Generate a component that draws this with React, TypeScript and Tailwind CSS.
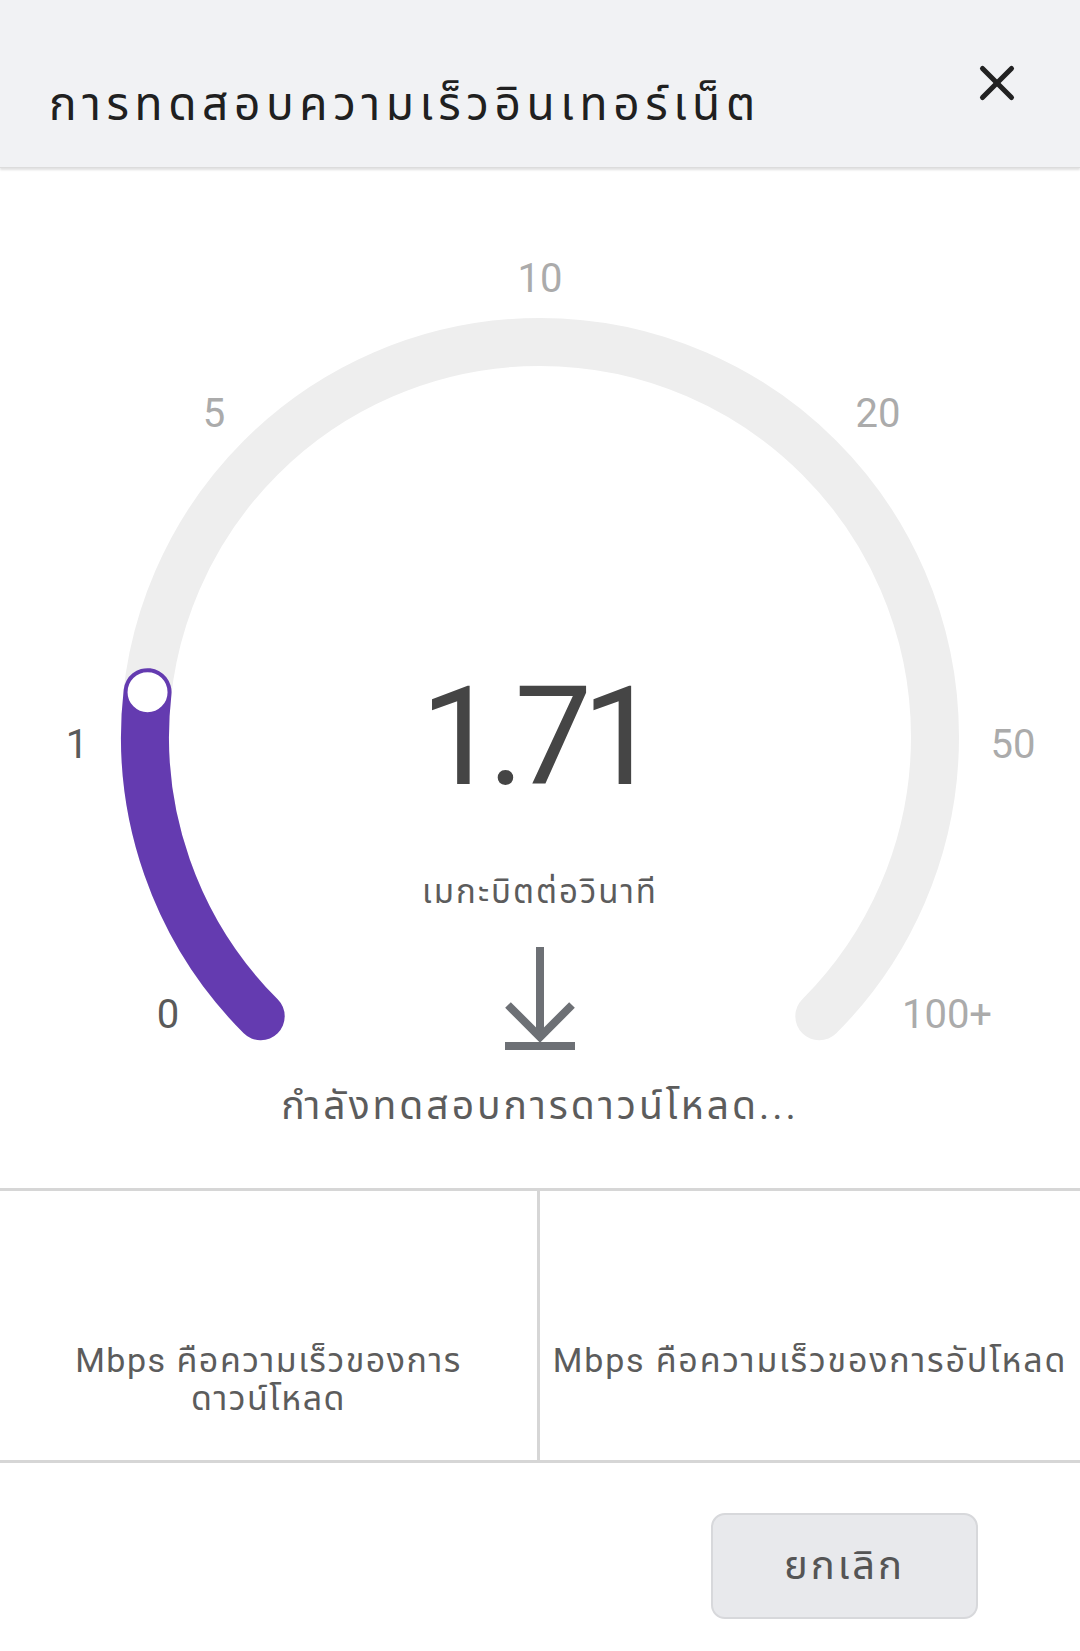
import { X } from "lucide-react";

const CENTER_X = 540;
const CENTER_Y = 569;
const RADIUS = 395;
const TRACK = 48;

const ticks = [
  { label: "0", x: 168, y: 846, dark: true },
  { label: "1", x: 77, y: 576, dark: true },
  { label: "5", x: 214, y: 245, dark: false },
  { label: "10", x: 540, y: 110, dark: false },
  { label: "20", x: 878, y: 245, dark: false },
  { label: "50", x: 1013, y: 576, dark: false },
  { label: "100+", x: 947, y: 846, dark: false },
];

function polar(angleDeg: number) {
  const rad = ((angleDeg - 90) * Math.PI) / 180;
  return {
    x: CENTER_X + RADIUS * Math.cos(rad),
    y: CENTER_Y + RADIUS * Math.sin(rad),
  };
}

function arcPath(from: number, to: number) {
  const a = polar(from);
  const b = polar(to);
  const large = to - from > 180 ? 1 : 0;
  return `M ${a.x} ${a.y} A ${RADIUS} ${RADIUS} 0 ${large} 1 ${b.x} ${b.y}`;
}

// 0 -> -135deg, 1 -> -90, 5 -> -45, 10 -> 0 ...
function valueToAngle(v: number) {
  if (v <= 1) return -135 + 45 * v;
  return -90 + (45 * (v - 1)) / 4.9;
}

function Gauge({ value }: { value: number }) {
  const angle = valueToAngle(value);
  const knob = polar(angle);
  return (
    <svg
      className="absolute left-0 top-0"
      width={1080}
      height={1020}
      viewBox="0 0 1080 1020"
    >
      <path
        d={arcPath(-135, 135)}
        fill="none"
        stroke="#eeeeee"
        strokeWidth={TRACK}
        strokeLinecap="round"
      />
      <path
        d={arcPath(-135, angle)}
        fill="none"
        stroke="#643bb0"
        strokeWidth={TRACK}
        strokeLinecap="round"
      />
      <circle cx={knob.x} cy={knob.y} r={21} fill="#ffffff" stroke="#643bb0" strokeWidth={2} />
      {ticks.map((t) => (
        <text
          key={t.label}
          x={t.x}
          y={t.y}
          textAnchor="middle"
          dominantBaseline="central"
          fontSize={40}
          fontFamily="Roboto, sans-serif"
          fill={t.dark ? "#5a5a5a" : "#ababab"}
        >
          {t.label}
        </text>
      ))}
    </svg>
  );
}

function DownloadArrow() {
  return (
    <svg width={70} height={105} viewBox="0 0 70 105">
      <g stroke="#6d7075" strokeWidth={8} fill="none">
        <line x1={35} y1={0} x2={35} y2={89} />
        <polyline points="3,58 35,90 67,58" strokeLinejoin="miter" />
        <line x1={0} y1={99} x2={70} y2={99} />
      </g>
    </svg>
  );
}

export default function App() {
  const thai = "font-['Roboto','Noto_Sans_Thai','Noto_Sans',sans-serif]";
  return (
    <div className={`w-[1080px] h-[1651px] bg-white flex flex-col ${thai}`}>
      <header className="h-[168px] shrink-0 bg-[#f1f2f4] flex items-start justify-between pl-[49px] pr-[54px] shadow-[0_2px_2px_rgba(0,0,0,0.12)] border-b border-[#dcdcdc] relative z-10">
        <h1 className="mt-[72px] text-[46px] leading-[64px] tracking-[5.6px] text-[#202020]">
          การทดสอบความเร็วอินเทอร์เน็ต
        </h1>
        <button className="mt-[54px] text-[#222]">
          <X size={58} strokeWidth={2.1} />
        </button>
      </header>

      <section className="relative h-[1020px] shrink-0">
        <Gauge value={1.71} />
        <div className="relative flex flex-col items-center pt-[500px]">
          <div className="text-[138px] leading-none tracking-[-10px] pr-[10px] text-[#454545] font-['Roboto',sans-serif]">
            1.71
          </div>
          <div className="mt-[64px] text-[33px] leading-[44px] tracking-[2px] text-[#5c5c5c]">
            เมกะบิตต่อวินาที
          </div>
          <div className="mt-[33px]">
            <DownloadArrow />
          </div>
          <div className="mt-[28px] text-[39px] leading-[52px] tracking-[3px] text-[#5c5c5c]">
            กำลังทดสอบการดาวน์โหลด...
          </div>
        </div>
      </section>

      <div className="grid grid-cols-2 h-[275px] border-y-[3px] border-[#d6d6d6] shrink-0">
        <div className="flex flex-col items-center justify-start pt-[150px] px-[30px] border-r-[3px] border-[#d6d6d6] text-center">
          <p className="text-[34px] leading-[38px] tracking-[1.5px] text-[#5c5c5c]">
            Mbps คือความเร็วของการ
            <br />
            ดาวน์โหลด
          </p>
        </div>
        <div className="flex flex-col items-center justify-start pt-[150px] text-center">
          <p className="text-[34px] leading-[38px] tracking-[1.8px] text-[#5c5c5c] whitespace-nowrap">
            Mbps คือความเร็วของการอัปโหลด
          </p>
        </div>
      </div>

      <div className="flex justify-end pr-[102px] pt-[50px]">
        <button className="w-[267px] h-[106px] rounded-[14px] bg-[#e8e9ec] border-2 border-[#d7d8db] text-[40px] tracking-[3px] text-[#555]">
          ยกเลิก
        </button>
      </div>
    </div>
  );
}
